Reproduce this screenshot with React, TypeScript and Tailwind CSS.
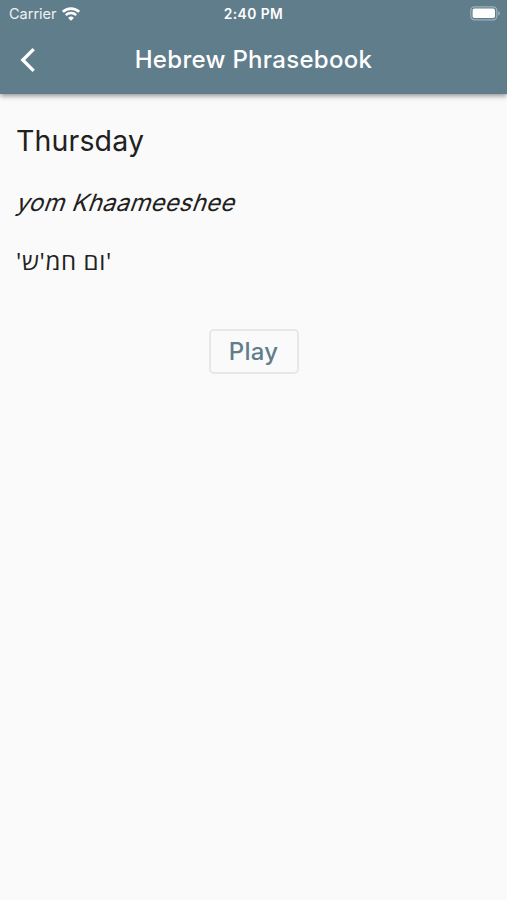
import type { ReactNode } from "react";

interface PhraseProps {
  english: string;
  phonetic: string;
  hebrew: string;
}

function WifiIcon() {
  return (
    <svg width="18" height="14" viewBox="0 0 18 14" fill="none" stroke="white">
      <path d="M0.8 4.9 A11.8 11.8 0 0 1 17.2 4.9" strokeWidth="2.7" />
      <path d="M3.8 8.1 A7.4 7.4 0 0 1 14.2 8.1" strokeWidth="2.4" />
      <path d="M9 13.7 L6.1 10.9 A4.2 4.2 0 0 1 11.9 10.9 Z" fill="white" stroke="none" />
    </svg>
  );
}

function BatteryIcon() {
  return (
    <svg width="31" height="15" viewBox="0 0 31 15" fill="none">
      <rect x="0.8" y="0.8" width="26" height="13" rx="3.6" stroke="white" strokeOpacity="0.4" strokeWidth="1.2" />
      <rect x="2.6" y="2.6" width="22.4" height="9.4" rx="1.8" fill="white" />
      <path d="M28.3 5 C30.3 5.8 30.3 8.8 28.3 9.6 Z" fill="white" fillOpacity="0.45" />
    </svg>
  );
}

function StatusBar() {
  return (
    <div className="grid h-[27px] grid-cols-[1fr_auto_1fr] items-center pr-[6px] pl-[9px]">
      <div className="flex items-center gap-[5px]">
        <span className="text-[14.5px] text-white/90">Carrier</span>
        <WifiIcon />
      </div>
      <span className="pt-px pr-[3px] text-center text-[13.8px] font-semibold tracking-[0.45px]">2:40 PM</span>
      <div className="flex justify-end">
        <BatteryIcon />
      </div>
    </div>
  );
}

function AppBar({ title }: { title: string }) {
  return (
    <header className="relative h-[94px] bg-[#607d8b] text-white shadow-[0_2px_5px_rgba(0,0,0,0.42)]">
      <StatusBar />
      <div className="grid h-[66px] grid-cols-[64px_1fr_64px] items-center">
        <button type="button" aria-label="Back" className="pl-[20px]">
          <svg width="16" height="26" viewBox="0 0 16 26" fill="none" stroke="white" strokeWidth="3.3">
            <path d="M13.7 2.1 L2.8 13 L13.7 23.9" />
          </svg>
        </button>
        <h1 className="text-center text-[24px] font-medium tracking-[0.3px] whitespace-nowrap">{title}</h1>
      </div>
    </header>
  );
}

function PlayButton({ children }: { children: ReactNode }) {
  return (
    <button
      type="button"
      className="h-[45px] w-[90px] rounded-[5px] border-2 border-[#e7e7e7] text-[24px] font-medium tracking-[0.2px] text-[#607d8b]"
    >
      {children}
    </button>
  );
}

function Phrase({ english, phonetic, hebrew }: PhraseProps) {
  return (
    <main className="flex flex-col items-start px-4 pt-[29px] text-[#212121]">
      <p className="text-[28.5px] leading-[36px] tracking-[0.15px]">{english}</p>
      <p className="mt-[28px] -ml-[4px] origin-bottom-left -skew-x-[20deg] text-[23.8px] leading-[32px] tracking-[0.28px]">
        {phonetic}
      </p>
      <p
        dir="rtl"
        lang="he"
        className="mt-[26px] font-['Open_Sans','Noto_Sans',sans-serif] text-[24px] leading-[32px] font-medium tracking-[0.65px]"
      >
        {hebrew}
      </p>
      <div className="mt-[52px] self-center">
        <PlayButton>Play</PlayButton>
      </div>
    </main>
  );
}

export default function App() {
  return (
    <div className="min-h-screen bg-[#fafafa] font-['Inter',sans-serif]">
      <AppBar title="Hebrew Phrasebook" />
      <Phrase english="Thursday" phonetic="yom Khaameeshee" hebrew="'ום חמ'ש'" />
    </div>
  );
}
